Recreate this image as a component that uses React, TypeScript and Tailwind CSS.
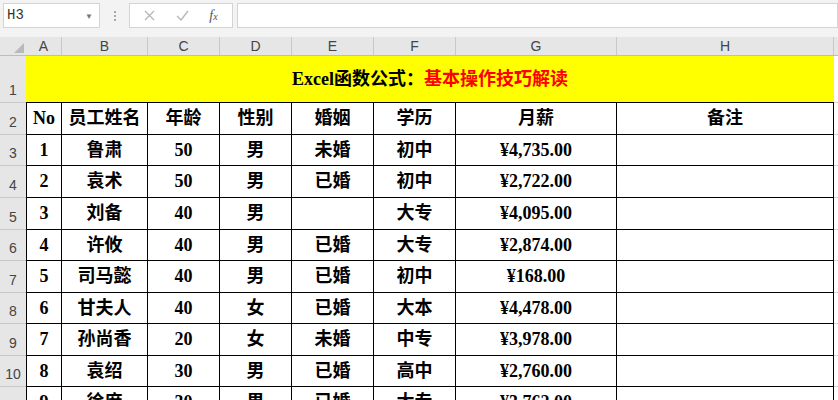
import React from 'react';

// column widths, left to right (A..H), border-box
const cols = [
  { key: 'A', w: 'w-[36px]' },
  { key: 'B', w: 'w-[86px]' },
  { key: 'C', w: 'w-[72px]' },
  { key: 'D', w: 'w-[72px]' },
  { key: 'E', w: 'w-[82px]' },
  { key: 'F', w: 'w-[82px]' },
  { key: 'G', w: 'w-[161px]' },
  { key: 'H', w: 'w-[217px]' },
];

const rows = [
  { n: 2, h: 'h-[32px]', cells: ['No', '员工姓名', '年龄', '性别', '婚姻', '学历', '月薪', '备注'] },
  { n: 3, h: 'h-[31px]', cells: ['1', '鲁肃', '50', '男', '未婚', '初中', '¥4,735.00', ''] },
  { n: 4, h: 'h-[32px]', cells: ['2', '袁术', '50', '男', '已婚', '初中', '¥2,722.00', ''] },
  { n: 5, h: 'h-[32px]', cells: ['3', '刘备', '40', '男', '', '大专', '¥4,095.00', ''] },
  { n: 6, h: 'h-[31px]', cells: ['4', '许攸', '40', '男', '已婚', '大专', '¥2,874.00', ''] },
  { n: 7, h: 'h-[32px]', cells: ['5', '司马懿', '40', '男', '已婚', '初中', '¥168.00', ''] },
  { n: 8, h: 'h-[31px]', cells: ['6', '甘夫人', '40', '女', '已婚', '大本', '¥4,478.00', ''] },
  { n: 9, h: 'h-[32px]', cells: ['7', '孙尚香', '20', '女', '未婚', '中专', '¥3,978.00', ''] },
  { n: 10, h: 'h-[31px]', cells: ['8', '袁绍', '30', '男', '已婚', '高中', '¥2,760.00', ''] },
  { n: 11, h: 'h-[32px]', cells: ['9', '徐庶', '30', '男', '已婚', '大专', '¥3,762.00', ''] },
];

const cellFont = "font-['Liberation_Serif','Noto_Sans_CJK_SC',serif] font-bold text-[18px] text-black";
const uiFont = "font-['Liberation_Sans','Noto_Sans_CJK_SC',sans-serif] text-[14px] text-[#444]";

function RowHead({ n, h }: { n: number | string; h: string }) {
  return (
    <div className={`${h} w-[26px] shrink-0 bg-[#e6e6e6] border-b border-[#c8c8c8] flex items-end justify-center pb-[1px] ${uiFont}`}>
      {n}
    </div>
  );
}

export default function App() {
  return (
    <div className="w-[838px] h-[400px] overflow-hidden bg-white">
      {/* formula bar */}
      <div className="h-[37px] bg-[#f3f3f3] flex items-start pt-[3px] pl-[3px]">
        <div className="w-[97px] h-[25px] bg-white border border-[#d4d4d4] flex items-center justify-between pl-[3px] pr-[6px]">
          <span className="font-['Liberation_Mono',monospace] text-[14px] text-[#333]">H3</span>
          <span className="text-[8px] text-[#777]">▼</span>
        </div>
        <div className="w-[29px] h-[25px] flex flex-col items-center justify-center gap-[2px]">
          <span className="w-[2px] h-[2px] bg-[#aaa]" />
          <span className="w-[2px] h-[2px] bg-[#aaa]" />
          <span className="w-[2px] h-[2px] bg-[#aaa]" />
        </div>
        <div className="w-[104px] h-[25px] bg-white border border-[#d4d4d4] flex items-center justify-around px-[4px]">
          <svg width="11" height="11" viewBox="0 0 11 11">
            <path d="M1 1 L10 10 M10 1 L1 10" stroke="#b5b5b5" strokeWidth="1.3" fill="none" />
          </svg>
          <svg width="13" height="11" viewBox="0 0 13 11">
            <path d="M1 6 L5 10 L12 1" stroke="#b5b5b5" strokeWidth="1.3" fill="none" />
          </svg>
          <span className="font-['Liberation_Serif',serif] italic text-[14px] text-[#555]">
            f<span className="text-[10px]">x</span>
          </span>
        </div>
        <div className="ml-[4px] flex-1 h-[25px] bg-white border border-[#d4d4d4]" />
      </div>

      {/* column headers */}
      <div className="flex h-[19px] bg-[#e6e6e6] border-b border-[#bdbdbd]">
        <div className="w-[26px] shrink-0 relative">
          <svg className="absolute right-[2px] bottom-[2px]" width="10" height="10" viewBox="0 0 10 10">
            <path d="M10 0 L10 10 L0 10 Z" fill="#b9b9b9" />
          </svg>
        </div>
        {cols.map((c) => (
          <div key={c.key} className={`${c.w} shrink-0 border-r border-[#c8c8c8] flex items-center justify-center ${uiFont}`}>
            {c.key}
          </div>
        ))}
        <div className="flex-1" />
      </div>

      {/* row 1: merged title */}
      <div className="flex">
        <RowHead n={1} h="h-[47px]" />
        <div className="w-[808px] h-[47px] shrink-0 bg-[#ffff00] border-b border-black flex items-center justify-center">
          <span className={cellFont}>
            Excel函数公式：<span className="text-[#ff0000]">基本操作技巧解读</span>
          </span>
        </div>
        <div className="flex-1 h-[47px] border-b border-[#d8d8d8]" />
      </div>

      {/* data rows */}
      {rows.map((r) => (
        <div key={r.n} className="flex">
          <RowHead n={r.n} h={r.h} />
          {cols.map((c, i) => (
            <div
              key={c.key}
              className={`${c.w} ${r.h} shrink-0 border-r border-b border-black flex items-center justify-center whitespace-nowrap ${i === 0 ? 'border-l' : ''} ${cellFont}`}
            >
              {r.cells[i]}
            </div>
          ))}
          <div className={`flex-1 ${r.h} border-b border-[#d8d8d8]`} />
        </div>
      ))}
    </div>
  );
}
